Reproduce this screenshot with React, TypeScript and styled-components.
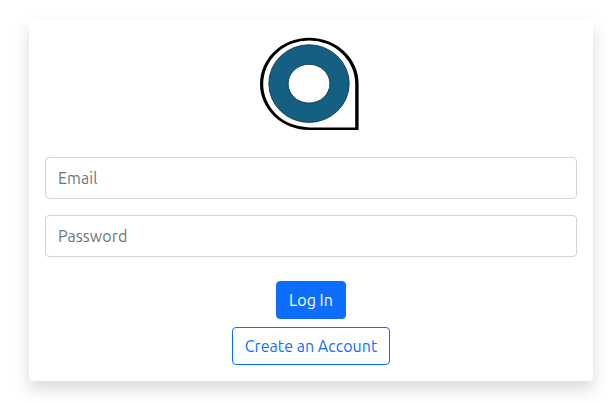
import React from "react";
import styled, { createGlobalStyle } from "styled-components";

const GlobalStyle = createGlobalStyle`
  * { box-sizing: border-box; }
  body { margin: 0; background: #fff; overflow: hidden; font-family: Ubuntu, "Noto Sans", sans-serif; }
`;

const Page = styled.main`
  height: 402px;
  padding: 20px 22px 21px 29px;
`;

const Card = styled.form`
  height: 361px;
  padding: 16px;
  display: flex;
  flex-direction: column;
  align-items: center;
  background: #fff;
  border-radius: 4px;
  box-shadow: 0 8px 16px rgba(0, 0, 0, 0.15);
`;

const Logo = styled.svg`
  display: block;
  width: 104px;
  height: 97px;
  margin: 0 4px 24px 0;
`;

const Field = styled.input`
  width: 100%;
  height: 42px;
  margin-bottom: 16px;
  padding: 6px 12px;
  border: 1px solid #ced4da;
  border-radius: 4px;
  background: #fff;
  font: 16px/24px Ubuntu, "Noto Sans", sans-serif;
  letter-spacing: 0.08px;
  &::placeholder { color: #6c757d; opacity: 1; }
`;

const Actions = styled.div`
  display: flex;
  flex-direction: column;
  align-items: center;
  gap: 8px;
  margin-top: 8px;
`;

const Button = styled.button<{ $outline?: boolean; $width: number }>`
  width: ${(p) => p.$width}px;
  height: 38px;
  padding: 0;
  white-space: nowrap;
  border: 1px solid #0d6efd;
  border-radius: 4px;
  background: ${(p) => (p.$outline ? "#fff" : "#0d6efd")};
  color: ${(p) => (p.$outline ? "#0d6efd" : "#fff")};
  font: 16px/24px Ubuntu, "Noto Sans", sans-serif;
  letter-spacing: 0.04px;
`;

export default function App() {
  return (
    <>
      <GlobalStyle />
      <Page>
        <Card>
          <Logo viewBox="257 36 104 97" aria-label="Logo">
            <path
              fillRule="evenodd"
              d="M358.6 130H309.3A49.3 46.1 0 1 1 358.6 83.9ZM355.2 127.4V83.9A46 43.5 0 1 0 309.2 127.4Z"
            />
            <ellipse cx="309" cy="83.6" rx="40.2" ry="38.8" fill="#156082" stroke="#0c3b50" strokeWidth="0.9" />
            <ellipse cx="309" cy="83.7" rx="20.9" ry="19.4" fill="#fff" stroke="#0c3b50" strokeWidth="0.9" />
          </Logo>
          <Field type="email" placeholder="Email" />
          <Field type="password" placeholder="Password" />
          <Actions>
            <Button type="button" $width={70}>Log In</Button>
            <Button type="button" $outline $width={158}>Create an Account</Button>
          </Actions>
        </Card>
      </Page>
    </>
  );
}
